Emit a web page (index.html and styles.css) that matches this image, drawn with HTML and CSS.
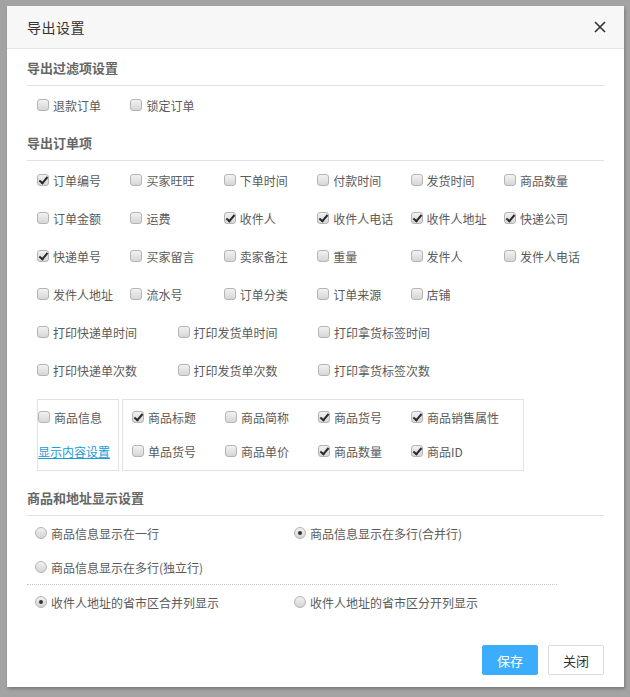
FILE: index.html
```html
<!DOCTYPE html>
<html lang="zh-CN">
<head>
<meta charset="utf-8">
<title>导出设置</title>
<link rel="stylesheet" href="styles.css">
</head>
<body>
<div class="backdrop">
  <div class="modal">
    <div class="modal-header">
      <span class="modal-title">导出设置</span>
      <span class="close-btn">
        <svg width="12" height="12" viewBox="0 0 12 12"><path d="M1 1 L11 11 M11 1 L1 11" stroke="#333" stroke-width="1.6" fill="none"/></svg>
      </span>
    </div>
    <div class="modal-body">
      <div class="section-title">导出过滤项设置</div>
      <div class="grid6 row-first">
        <label class="item"><span class="cb"></span>退款订单</label>
        <label class="item"><span class="cb"></span>锁定订单</label>
      </div>

      <div class="section-title">导出订单项</div>
      <div class="grid6">
        <label class="item"><span class="cb on"></span>订单编号</label>
        <label class="item"><span class="cb"></span>买家旺旺</label>
        <label class="item"><span class="cb"></span>下单时间</label>
        <label class="item"><span class="cb"></span>付款时间</label>
        <label class="item"><span class="cb"></span>发货时间</label>
        <label class="item"><span class="cb"></span>商品数量</label>

        <label class="item"><span class="cb"></span>订单金额</label>
        <label class="item"><span class="cb"></span>运费</label>
        <label class="item"><span class="cb on"></span>收件人</label>
        <label class="item"><span class="cb on"></span>收件人电话</label>
        <label class="item"><span class="cb on"></span>收件人地址</label>
        <label class="item"><span class="cb on"></span>快递公司</label>

        <label class="item"><span class="cb on"></span>快递单号</label>
        <label class="item"><span class="cb"></span>买家留言</label>
        <label class="item"><span class="cb"></span>卖家备注</label>
        <label class="item"><span class="cb"></span>重量</label>
        <label class="item"><span class="cb"></span>发件人</label>
        <label class="item"><span class="cb"></span>发件人电话</label>

        <label class="item"><span class="cb"></span>发件人地址</label>
        <label class="item"><span class="cb"></span>流水号</label>
        <label class="item"><span class="cb"></span>订单分类</label>
        <label class="item"><span class="cb"></span>订单来源</label>
        <label class="item"><span class="cb"></span>店铺</label>
      </div>
      <div class="grid4">
        <label class="item"><span class="cb"></span>打印快递单时间</label>
        <label class="item"><span class="cb"></span>打印发货单时间</label>
        <label class="item"><span class="cb"></span>打印拿货标签时间</label>
        <label class="item"><span class="cb"></span>打印快递单次数</label>
        <label class="item"><span class="cb"></span>打印发货单次数</label>
        <label class="item"><span class="cb"></span>打印拿货标签次数</label>
      </div>

      <div class="product">
        <div class="product-left">
          <label class="item tight"><span class="cb"></span>商品信息</label>
          <a class="link" href="#">显示内容设置</a>
        </div>
        <div class="product-right">
          <label class="item"><span class="cb on"></span>商品标题</label>
          <label class="item"><span class="cb"></span>商品简称</label>
          <label class="item"><span class="cb on"></span>商品货号</label>
          <label class="item"><span class="cb on"></span>商品销售属性</label>
          <label class="item"><span class="cb"></span>单品货号</label>
          <label class="item"><span class="cb"></span>商品单价</label>
          <label class="item"><span class="cb on"></span>商品数量</label>
          <label class="item"><span class="cb on"></span>商品ID</label>
        </div>
      </div>

      <div class="section-title">商品和地址显示设置</div>
      <div class="radios">
        <div class="radio-row">
          <label class="ritem"><span class="rd"></span>商品信息显示在一行</label>
          <label class="ritem"><span class="rd on"></span>商品信息显示在多行(合并行)</label>
        </div>
        <div class="radio-row">
          <label class="ritem"><span class="rd"></span>商品信息显示在多行(独立行)</label>
        </div>
        <div class="radio-row dotted">
          <label class="ritem"><span class="rd on"></span>收件人地址的省市区合并列显示</label>
          <label class="ritem"><span class="rd"></span>收件人地址的省市区分开列显示</label>
        </div>
      </div>
    </div>
    <div class="modal-footer">
      <button class="btn btn-primary">保存</button>
      <button class="btn btn-default">关闭</button>
    </div>
  </div>
</div>
</body>
</html>
```

FILE: styles.css
```css
* { box-sizing: border-box; }
html, body {
  margin: 0;
  padding: 0;
}
body {
  width: 630px;
  height: 697px;
  overflow: hidden;
  background: #a3a3a3;
  font-family: "Liberation Sans", "Noto Sans CJK SC", sans-serif;
  font-size: 12px;
  color: #555;
}
.backdrop {
  padding: 6px 0 0 7px;
}
.modal {
  width: 617px;
  height: 681px;
  background: #fff;
  display: flex;
  flex-direction: column;
  box-shadow: 1px 2px 3px rgba(0,0,0,0.25);
}
.modal-header {
  height: 43px;
  background: #f7f7f7;
  border-bottom: 1px solid #e5e5e5;
  display: flex;
  align-items: center;
  justify-content: space-between;
  padding: 0 18px 0 20px;
}
.modal-title {
  font-size: 14px;
  color: #333;
  font-family: "Noto Sans CJK SC", sans-serif;
  letter-spacing: 0.5px;
}
.close-btn {
  display: flex;
  width: 12px;
  height: 12px;
}
.modal-body {
  padding: 0 20px;
}
.section-title {
  height: 37px;
  line-height: 38px;
  font-size: 13px;
  font-weight: bold;
  color: #666;
  border-bottom: 1px solid #e2e2e2;
  font-family: "Noto Sans CJK SC", sans-serif;
}
.grid6 {
  display: grid;
  grid-template-columns: repeat(6, 93.4px);
  padding-left: 10px;
}
.grid4 {
  display: grid;
  grid-template-columns: repeat(3, 140.5px);
  padding-left: 10px;
}
.item {
  height: 38px;
  display: flex;
  align-items: center;
  white-space: nowrap;
  color: #5a5a5a;
  font-family: "Noto Sans CJK SC", sans-serif;
}
.cb {
  position: relative;
  width: 12px;
  height: 12px;
  border: 1px solid #b4b4b4;
  border-radius: 3px;
  background: linear-gradient(#f2f2f2, #d6d6d6);
  margin-right: 4px;
  flex: none;
}
.cb.on::after {
  content: "";
  position: absolute;
  left: 3px;
  top: 0px;
  width: 3px;
  height: 7px;
  border-right: 2px solid #2a2a2a;
  border-bottom: 2px solid #2a2a2a;
  transform: rotate(40deg);
}
.product {
  display: flex;
  gap: 3px;
  margin: 10px 0 8px 10px;
}
.product-left {
  width: 82px;
  height: 72px;
  border: 1px solid #e2e2e2;
}
.product-left .item {
  height: 34px;
}
.link {
  display: flex;
  align-items: center;
  height: 34px;
  color: #1a9bd7;
  text-decoration: underline;
  font-family: "Noto Sans CJK SC", sans-serif;
}
.product-right {
  width: 402px;
  height: 72px;
  border: 1px solid #e2e2e2;
  padding: 0 0 0 9px;
  display: grid;
  grid-template-columns: repeat(4, 93px);
  grid-auto-rows: 34px;
}
.product-right .item {
  height: 34px;
}
.radios {
  width: 530px;
}
.radio-row {
  height: 34px;
  display: grid;
  grid-template-columns: 259px 259px;
  padding-left: 8px;
}
.radio-row.dotted {
  border-top: 1px dotted #c8c8c8;
  height: 35px;
}
.ritem {
  display: flex;
  align-items: center;
  white-space: nowrap;
  color: #5a5a5a;
  font-family: "Noto Sans CJK SC", sans-serif;
}
.rd {
  position: relative;
  width: 12px;
  height: 12px;
  border: 1px solid #b4b4b4;
  border-radius: 50%;
  background: linear-gradient(#f2f2f2, #d4d4d4);
  margin-right: 4px;
  flex: none;
}
.rd.on::after {
  content: "";
  position: absolute;
  left: 3px;
  top: 3px;
  width: 4px;
  height: 4px;
  border-radius: 50%;
  background: #333;
}
.modal-footer {
  margin-top: auto;
  display: flex;
  justify-content: flex-end;
  gap: 10px;
  padding: 0 20px 12px 0;
}
.btn {
  width: 56px;
  height: 30px;
  border-radius: 2px;
  font-size: 13px;
  font-family: "Noto Sans CJK SC", sans-serif;
  cursor: pointer;
  padding: 0;
}
.btn-primary {
  background: #3cadfc;
  border: 1px solid #3cadfc;
  color: #fff;
}
.btn-default {
  background: #fff;
  border: 1px solid #dcdcdc;
  color: #333;
}
```
